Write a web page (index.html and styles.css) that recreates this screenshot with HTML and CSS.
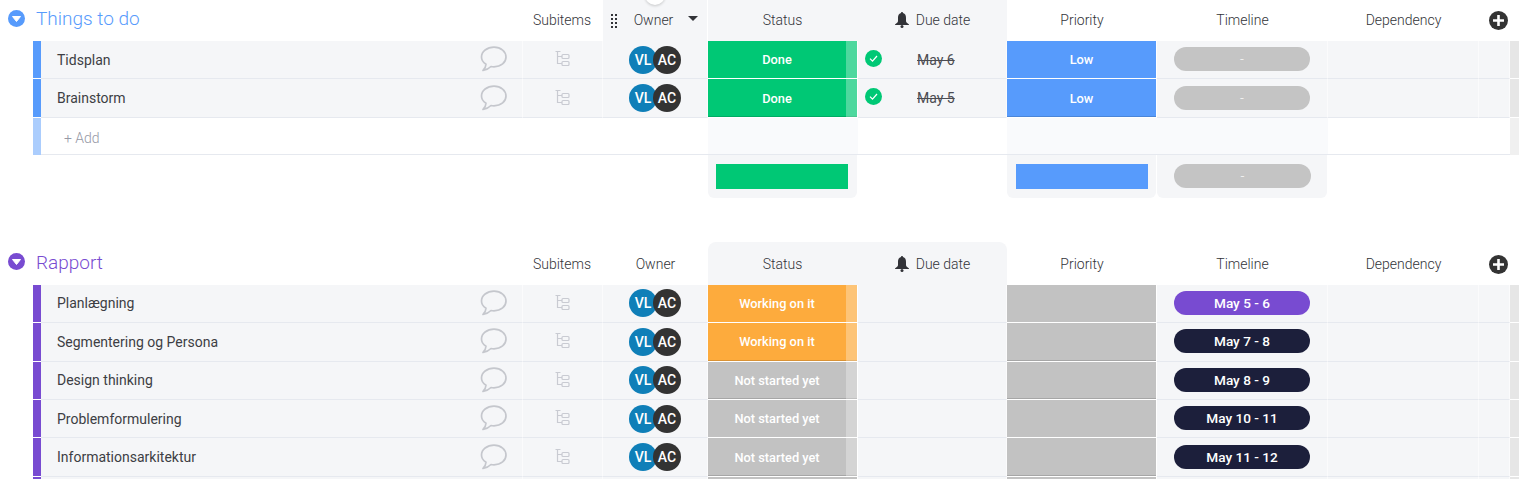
FILE: index.html
```html
<!DOCTYPE html>
<html lang="en">
<head>
     <meta charset="UTF-8">
     <title>Board</title>
     <link rel="stylesheet" href="styles.css">
</head>
<body>
<svg class="defs" aria-hidden="true">
     <symbol id="i-comment" viewBox="0 0 27 26">
          <path d="M6 18.3C3 16.4 1.5 13.8 1.5 11 1.5 5.5 7 1.2 14 1.2S26 5.5 26 11 21 20.8 14 20.8C13 20.8 12 20.7 11 20.5 9 22.5 6 24 3 24.5 4.8 23 5.8 20.8 6 18.3Z" fill="none" stroke="#c5c7cd" stroke-width="1.7" stroke-linejoin="round"/>
     </symbol>
     <symbol id="i-sub" viewBox="0 0 15 16">
          <path d="M.5 1.5H5.5M2.5 1.5V13.5H7M2.5 6.5H7" fill="none" stroke="#c9cbd2" stroke-width="1.2"/>
          <rect x="7" y="4.5" width="7" height="4" rx="1" fill="none" stroke="#c9cbd2" stroke-width="1.2"/>
          <rect x="7" y="11.5" width="7" height="4" rx="1" fill="none" stroke="#c9cbd2" stroke-width="1.2"/>
     </symbol>
     <symbol id="i-bell" viewBox="0 0 14 16">
          <path d="M7 0C7.7 0 8 .5 8 1.1 10.300 1.700 11 3.600 11 6V9C11 10.500 12.300 11.300 14 12.400V13H0V12.400C1.700 11.300 3 10.500 3 9V6C3 3.600 3.700 1.700 6 1.100 6 .5 6.300 0 7 0Z" fill="#323338"/>
          <circle cx="7" cy="14.500" r="1.500" fill="#323338"/>
     </symbol>
     <symbol id="i-check" viewBox="0 0 17 17">
          <circle cx="8.500" cy="8.500" r="8.500" fill="#00c875"/>
          <path d="M5 8.700L7.500 11.200 12 6" fill="none" stroke="#fff" stroke-width="1.200"/>
     </symbol>
     <symbol id="i-plus" viewBox="0 0 19 19">
          <circle cx="9.500" cy="9.500" r="9.500" fill="#333"/>
          <path d="M9.500 4V15M4 9.500H15" stroke="#fff" stroke-width="2.600"/>
     </symbol>
     <symbol id="i-fold" viewBox="0 0 17 17">
          <circle cx="8.500" cy="8.500" r="8.500" fill="currentColor"/>
          <path d="M4.500 6.500H12.500L8.500 11.500Z" fill="#fff" stroke="#fff" stroke-linejoin="round"/>
     </symbol>
</svg>

<div class="group blue first">
     <div class="cols head">
          <div class="fold"><svg class="fold-icon"><use href="#i-fold"/></svg></div>
          <div class="title">Things to do</div>
          <div class="h sub-h">Subitems</div>
          <div class="h owner-h">
               <span class="handle-ball"></span>
               <span class="dots"></span>
               <span>Owner</span>
               <span class="caret"></span>
          </div>
          <div class="h tint-l">Status</div>
          <div class="h tint-r"><svg class="bell"><use href="#i-bell"/></svg>Due date</div>
          <div class="h">Priority</div>
          <div class="h">Timeline</div>
          <div class="h">Dependency</div>
          <div class="h"><svg class="plus"><use href="#i-plus"/></svg></div>
     </div>

     <div class="cols row">
          <div></div><div class="bar"></div>
          <div class="c name"><span>Tidsplan</span><svg class="comment"><use href="#i-comment"/></svg></div>
          <div class="c"><svg class="sub"><use href="#i-sub"/></svg></div>
          <div class="c"><span class="av vl">VL</span><span class="av ac">AC</span></div>
          <div class="c status done"><span class="lbl">Done</span><span class="flap"></span></div>
          <div class="c due"><svg class="check"><use href="#i-check"/></svg><s>May 6</s></div>
          <div class="c pri low">Low</div>
          <div class="c"><span class="pill empty">-</span></div>
          <div class="c"></div><div class="c"></div><div class="strip"></div>
     </div>
     <div class="cols row">
          <div></div><div class="bar"></div>
          <div class="c name"><span>Brainstorm</span><svg class="comment"><use href="#i-comment"/></svg></div>
          <div class="c"><svg class="sub"><use href="#i-sub"/></svg></div>
          <div class="c"><span class="av vl">VL</span><span class="av ac">AC</span></div>
          <div class="c status done edge"><span class="lbl">Done</span><span class="flap"></span></div>
          <div class="c due"><svg class="check"><use href="#i-check"/></svg><s>May 5</s></div>
          <div class="c pri low edge">Low</div>
          <div class="c"><span class="pill empty">-</span></div>
          <div class="c"></div><div class="c"></div><div class="strip"></div>
     </div>

     <div class="cols add">
          <div></div><div class="bar light"></div>
          <div class="a add-label">+ Add</div>
          <div class="a tinted"></div>
          <div class="a"></div>
          <div class="a tinted"></div>
          <div class="a tinted"></div>
          <div class="a"></div>
          <div class="a"></div>
          <div class="strip light"></div>
     </div>

     <div class="cols foot">
          <div class="foot-gap"></div>
          <div class="f f-status"><span class="sum green"></span></div>
          <div></div>
          <div class="f f-pri"><span class="sum low-bg"></span></div>
          <div class="f f-time"><span class="pill empty wide">-</span></div>
     </div>
</div>

<div class="group purple">
     <div class="cols head">
          <div class="fold"><svg class="fold-icon"><use href="#i-fold"/></svg></div>
          <div class="title">Rapport</div>
          <div class="h sub-h">Subitems</div>
          <div class="h">Owner</div>
          <div class="h tint-l">Status</div>
          <div class="h tint-r"><svg class="bell"><use href="#i-bell"/></svg>Due date</div>
          <div class="h">Priority</div>
          <div class="h">Timeline</div>
          <div class="h">Dependency</div>
          <div class="h"><svg class="plus"><use href="#i-plus"/></svg></div>
     </div>

     <div class="cols row">
          <div></div><div class="bar"></div>
          <div class="c name"><span>Planlægning</span><svg class="comment"><use href="#i-comment"/></svg></div>
          <div class="c"><svg class="sub"><use href="#i-sub"/></svg></div>
          <div class="c"><span class="av vl">VL</span><span class="av ac">AC</span></div>
          <div class="c status working"><span class="lbl">Working on it</span><span class="flap"></span></div>
          <div class="c"></div>
          <div class="c pri none"></div>
          <div class="c"><span class="pill violet">May 5 - 6</span></div>
          <div class="c"></div><div class="c"></div><div class="strip"></div>
     </div>
     <div class="cols row">
          <div></div><div class="bar"></div>
          <div class="c name"><span>Segmentering og Persona</span><svg class="comment"><use href="#i-comment"/></svg></div>
          <div class="c"><svg class="sub"><use href="#i-sub"/></svg></div>
          <div class="c"><span class="av vl">VL</span><span class="av ac">AC</span></div>
          <div class="c status working edge"><span class="lbl">Working on it</span><span class="flap"></span></div>
          <div class="c"></div>
          <div class="c pri none edge"></div>
          <div class="c"><span class="pill navy">May 7 - 8</span></div>
          <div class="c"></div><div class="c"></div><div class="strip"></div>
     </div>
     <div class="cols row">
          <div></div><div class="bar"></div>
          <div class="c name"><span>Design thinking</span><svg class="comment"><use href="#i-comment"/></svg></div>
          <div class="c"><svg class="sub"><use href="#i-sub"/></svg></div>
          <div class="c"><span class="av vl">VL</span><span class="av ac">AC</span></div>
          <div class="c status none edge"><span class="lbl">Not started yet</span><span class="flap"></span></div>
          <div class="c"></div>
          <div class="c pri none edge"></div>
          <div class="c"><span class="pill navy">May 8 - 9</span></div>
          <div class="c"></div><div class="c"></div><div class="strip"></div>
     </div>
     <div class="cols row">
          <div></div><div class="bar"></div>
          <div class="c name"><span>Problemformulering</span><svg class="comment"><use href="#i-comment"/></svg></div>
          <div class="c"><svg class="sub"><use href="#i-sub"/></svg></div>
          <div class="c"><span class="av vl">VL</span><span class="av ac">AC</span></div>
          <div class="c status none"><span class="lbl">Not started yet</span><span class="flap"></span></div>
          <div class="c"></div>
          <div class="c pri none"></div>
          <div class="c"><span class="pill navy">May 10 - 11</span></div>
          <div class="c"></div><div class="c"></div><div class="strip"></div>
     </div>
     <div class="cols row">
          <div></div><div class="bar"></div>
          <div class="c name"><span>Informationsarkitektur</span><svg class="comment"><use href="#i-comment"/></svg></div>
          <div class="c"><svg class="sub"><use href="#i-sub"/></svg></div>
          <div class="c"><span class="av vl">VL</span><span class="av ac">AC</span></div>
          <div class="c status none edge"><span class="lbl">Not started yet</span><span class="flap"></span></div>
          <div class="c"></div>
          <div class="c pri none edge"></div>
          <div class="c"><span class="pill navy">May 11 - 12</span></div>
          <div class="c"></div><div class="c"></div><div class="strip"></div>
     </div>
     <div class="cols row cut">
          <div></div><div class="bar"></div>
          <div class="c name"></div>
          <div class="c"></div>
          <div class="c"></div>
          <div class="c status none"></div>
          <div class="c"></div>
          <div class="c pri none"></div>
          <div class="c"></div>
          <div class="c"></div><div class="c"></div><div class="strip"></div>
     </div>
</div>
</body>
</html>
```

FILE: styles.css
```css
html, body{
     margin: 0;
     padding: 0;
     height: 479px;
     overflow: hidden;
     background: #fff;
}
body{
     font-family: Roboto, "Liberation Sans", sans-serif;
     font-size: 14px;
     color: #323338;
}
.defs{
     display: none;
}

/* every line of the board shares these columns */
.cols{
     display: grid;
     width: 1519px;
     grid-template-columns: 33px 8px 482px 80px 105px 150px 149px 150px 171px 151px 31px 9px;
}

.blue{
     color: #579bfc;
     --tag: #579bfc;
}
.purple{
     color: #784bd1;
     --tag: #784bd1;
}
.group{
     margin-top: 44px;
}
.group.first{
     margin-top: 0;
}

/* header */
.head{
     height: 43px;
     box-sizing: border-box;
}
.first .head{
     height: 41px;
}
.fold{
     display: flex;
     align-items: center;
     padding-left: 8px;
     padding-bottom: 4px;
}
.fold-icon{
     width: 17px;
     height: 17px;
}
.title{
     grid-column: span 2;
     display: flex;
     align-items: center;
     padding-left: 3px;
     padding-bottom: 1px;
     font-size: 19px;
     font-weight: 300;
}
.first .title{
     padding-bottom: 4px;
}
.h{
     display: flex;
     align-items: center;
     justify-content: center;
     padding-top: 2px;
     font-weight: 300;
     color: #323338;
}
.first .h{
     padding-top: 0;
     padding-bottom: 1px;
}
.h:last-child{
     grid-column: span 2;
     justify-content: flex-start;
     padding-left: 10px;
}
.sub-h{
     padding-right: 2px;
}
.owner-h{
     position: relative;
     background: #f5f6f8;
     margin-right: 1px;
     padding-right: 3px;
}
.tint-l, .tint-r{
     background: #f5f6f8;
}
.tint-l{
     border-top-left-radius: 8px;
     padding-right: 1px;
}
.tint-r{
     border-top-right-radius: 8px;
}
.first .tint-l, .first .tint-r{
     border-radius: 0;
}
.bell{
     width: 14px;
     height: 16px;
     margin-right: 7px;
}
.plus{
     width: 19px;
     height: 19px;
}
.dots{
     position: absolute;
     left: 7px;
     top: 13px;
     width: 9px;
     height: 15px;
     background: radial-gradient(circle, #323338 1.1px, transparent 1.3px) 0 0 / 4px 4px;
}
.caret{
     position: absolute;
     right: 9px;
     top: 16px;
     border-left: 5px solid transparent;
     border-right: 5px solid transparent;
     border-top: 5px solid #323338;
}
.handle-ball{
     position: absolute;
     left: 42px;
     top: -15px;
     width: 20px;
     height: 20px;
     border-radius: 50%;
     background: #fff;
     box-shadow: 0 1px 3px rgba(0,0,0,.2);
}

/* item rows */
.row{
     height: 38.4px;
}
.row > div{
     box-sizing: border-box;
}
/* the next row only just shows at the foot of the window */
.row.cut{
     height: 2px;
}
.row.cut > div{
     border-bottom: 0;
}
.bar{
     background: var(--tag);
     border-bottom: 1px solid #fff;
}
.bar.light{
     background: #abcdfd;
}
.c{
     display: flex;
     align-items: center;
     justify-content: center;
     background: #f5f6f8;
     border-right: 1px solid #fbfbfc;
     border-bottom: 1px solid #e6e9ef;
     color: #323338;
     min-width: 0;
}
.strip{
     background: #e6e6e6;
     border-bottom: 1px solid #fff;
}
.strip.light{
     background: #f0f0f0;
     border-bottom: 0;
}
.name{
     justify-content: space-between;
     padding: 0 15px 0 16px;
     color: #3d3e44;
}
.comment{
     width: 27px;
     height: 26px;
     margin-top: -1px;
}
.sub{
     width: 15px;
     height: 16px;
     margin-top: -3px;
}
.av{
     display: flex;
     align-items: center;
     justify-content: center;
     width: 28px;
     height: 28px;
     border-radius: 50%;
     color: #fff;
     font-weight: 500;
     font-size: 14px;
}
.vl{
     background: #0f7fb8;
}
.ac{
     background: #333;
     margin-left: -4px;
     position: relative;
}

/* status and priority */
.status, .pri{
     color: #fff;
     font-size: 12.8px;
     font-weight: 500;
     border-right: 1px solid #fff;
     border-bottom: 1px solid #fff;
     align-items: stretch;
}
.pri{
     align-items: center;
}
.edge{
     box-shadow: inset 0 -1px rgba(0,0,0,.14);
}
.lbl{
     flex: 1;
     display: flex;
     align-items: center;
     justify-content: center;
}
.flap{
     width: 11px;
     background: rgba(255,255,255,.3);
}
.done{
     background: #00c875;
}
.working{
     background: #fdab3d;
}
.none{
     background: #c2c2c2;
}
.low{
     background: #579bfc;
}
.due{
     justify-content: flex-start;
     padding-left: 7px;
}
.check{
     width: 17px;
     height: 17px;
     margin-top: -3px;
}
.due s{
     margin-left: 35px;
     color: #4b4c52;
}
.pill{
     display: flex;
     align-items: center;
     justify-content: center;
     width: 136px;
     height: 24px;
     border-radius: 12px;
     color: #fff;
     font-weight: 500;
     font-size: 13.6px;
     margin-top: -1px;
}
.pill.empty{
     background: #c4c4c4;
     font-weight: 300;
}
.pill.wide{
     width: 137px;
}
.violet{
     background: #784bd1;
}
.navy{
     background: #1c1f3b;
}

/* add line */
.add{
     height: 37px;
}
.a{
     background: #fff;
     border-bottom: 1px solid #e6e9ef;
}
.add .bar{
     border-bottom: 0;
}
.add-label{
     grid-column: span 3;
     padding: 12px 0 0 23px;
     box-sizing: border-box;
     color: #9699a6;
     font-weight: 300;
}
.a.tinted{
     background: #f9fafc;
}

/* totals under the group */
.foot{
     height: 43px;
}
.foot-gap{
     grid-column: span 5;
}
.f{
     background: #f5f6f8;
     margin-right: 1px;
     border-radius: 0 0 6px 6px;
     box-sizing: border-box;
     padding-top: 9px;
}
.sum{
     display: block;
     height: 25px;
}
.f-status{
     padding-left: 8px;
     padding-right: 9px;
}
.f-pri{
     padding-left: 9px;
     padding-right: 8px;
}
.f-time{
     padding-left: 17px;
}
.f-time .pill{
     margin-top: 0;
}
.green{
     background: #00c875;
}
.low-bg{
     background: #579bfc;
}
```
